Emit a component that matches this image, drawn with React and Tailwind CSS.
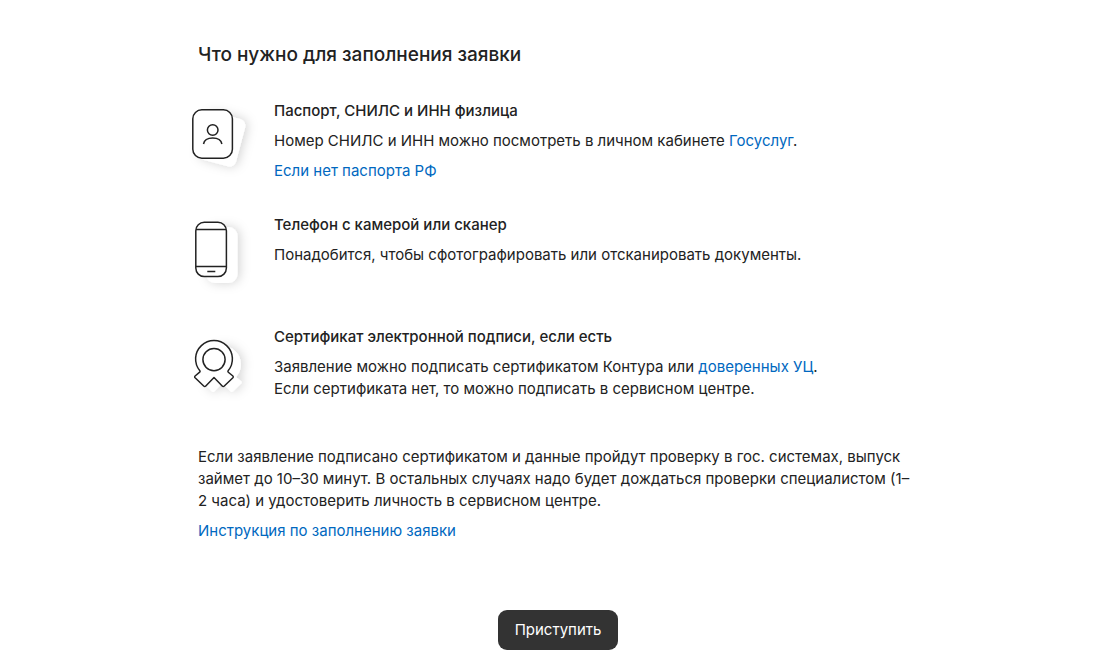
import React from 'react';

const ROSETTE =
  'M9.9 45.8A18.4 18.4 0 1 1 38.1 45.8Q37.6 46.6 38.3 47.2L42.9 51Q43.8 51.9 42.9 52.8L34.3 61Q33.2 62 32.2 61L24 52.6L15.8 61Q14.8 62 13.7 61L5.1 52.8Q4.2 51.9 5.1 51L9.7 47.2Q10.4 46.6 9.9 45.8Z';

function IconFrame({ id, back, children }) {
  return (
    <svg viewBox="0 1 84 80" className="-ml-2 h-20 w-21 shrink-0 overflow-visible" fill="none" aria-hidden="true">
      <defs>
        <filter id={id} x="-60%" y="-60%" width="220%" height="220%">
          <feDropShadow dx="2" dy="0" stdDeviation="5.5" floodColor="#000" floodOpacity="0.18" />
        </filter>
      </defs>
      <g filter={`url(#${id})`} fill="#fff">{back}</g>
      <g stroke="#222" strokeWidth="1.5">{children}</g>
    </svg>
  );
}

function PassportIcon() {
  return (
    <IconFrame
      id="passport-shadow"
      back={<rect x="11.3" y="15.8" width="40" height="49" rx="7" transform="rotate(15 31.3 40.3)" />}
    >
      <rect x="2.8" y="10.8" width="39.6" height="48.4" rx="9" fill="#fff" />
      <circle cx="22.7" cy="31" r="5.3" />
      <path d="M13.5 45C14.2 41.2 18 39 22.7 39S31.2 41.2 31.9 45" />
    </IconFrame>
  );
}

function PhoneIcon() {
  return (
    <IconFrame id="phone-shadow" back={<rect x="16" y="14" width="31.5" height="56" rx="9" />}>
      <rect x="5.8" y="9.2" width="30.6" height="54.4" rx="8.5" fill="#fff" />
      <path d="M6 16.5H36M6 53.5H36M17.3 58.5H25.3" />
    </IconFrame>
  );
}

function CertificateIcon() {
  return (
    <IconFrame id="certificate-shadow" back={<path d={ROSETTE} transform="translate(8.5 5.5)" />}>
      <path d={ROSETTE} fill="#fff" strokeLinejoin="round" />
      <circle cx="24" cy="34.6" r="11.1" />
    </IconFrame>
  );
}

function TextLink({ children }) {
  return (
    <a href="#" className="text-[#0068c0] hover:underline">
      {children}
    </a>
  );
}

function Requirement({ icon, title, children }) {
  return (
    <li className="flex">
      {icon}
      <div className="flex flex-col gap-2">
        <h2 className="font-medium">{title}</h2>
        {children}
      </div>
    </li>
  );
}

export default function App() {
  return (
    <main className="bg-white pt-10 pr-[3px] pb-4 font-['Inter','Liberation_Sans',sans-serif] text-[15px] leading-[22px] text-[#222]">
      <div className="mx-auto max-w-[720px]">
        <h1 className="text-[19px] leading-[30px] font-medium">Что нужно для заполнения заявки</h1>

        <ul className="mt-[30px] flex flex-col gap-8">
          <Requirement icon={<PassportIcon />} title="Паспорт, СНИЛС и ИНН физлица">
            <p>
              Номер СНИЛС и ИНН можно посмотреть в личном кабинете <TextLink>Госуслуг</TextLink>.
            </p>
            <p>
              <TextLink>Если нет паспорта РФ</TextLink>
            </p>
          </Requirement>
          <Requirement icon={<PhoneIcon />} title="Телефон с камерой или сканер">
            <p>Понадобится, чтобы сфотографировать или отсканировать документы.</p>
          </Requirement>
          <Requirement icon={<CertificateIcon />} title="Сертификат электронной подписи, если есть">
            <p>
              Заявление можно подписать сертификатом Контура или <TextLink>доверенных УЦ</TextLink>.
              <br />
              Если сертификата нет, то можно подписать в сервисном центре.
            </p>
          </Requirement>
        </ul>

        <div className="mt-10 flex flex-col gap-2">
          <p>
            Если заявление подписано сертификатом и данные пройдут проверку в гос. системах, выпуск
            займет до 10–30 минут. В остальных случаях надо будет дождаться проверки специалистом (1–
            <wbr />2 часа) и удостоверить личность в сервисном центре.
          </p>
          <p>
            <TextLink>Инструкция по заполнению заявки</TextLink>
          </p>
        </div>

        <div className="mt-17 flex justify-center">
          <button type="button" className="h-10 w-30 rounded-[9px] bg-[#333] text-white">
            Приступить
          </button>
        </div>
      </div>
    </main>
  );
}
